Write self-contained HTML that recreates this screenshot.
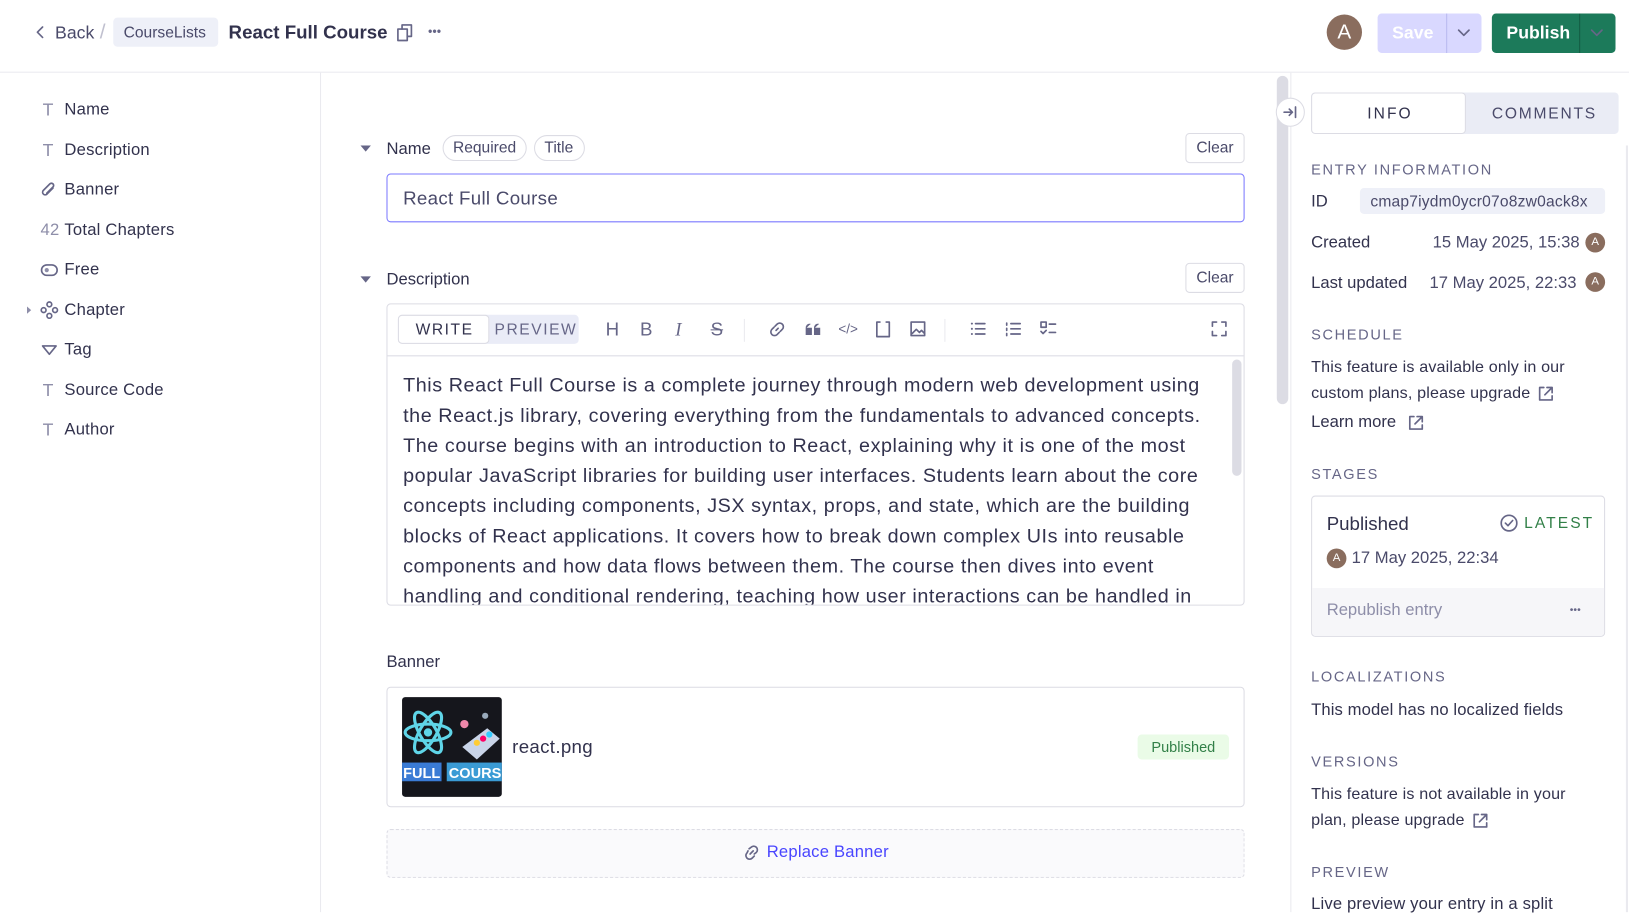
<!DOCTYPE html>
<html><head><meta charset="utf-8"><style>
*{box-sizing:border-box;margin:0;padding:0}
html,body{width:1629px;height:912px;overflow:hidden;background:#fff}
#w{position:absolute;left:0;top:0;width:1568px;height:878px;transform:scale(1.03891);transform-origin:0 0;font-family:"Liberation Sans",sans-serif;color:#32324d;background:#fff}
.a{position:absolute}
.t{position:absolute;white-space:nowrap;line-height:1}
.hd{font-size:14px;letter-spacing:1.6px;color:#666687;font-weight:500}
.btnc{position:absolute;border:1px solid #dcdce4;border-radius:4px;background:#fff;font-size:15px;color:#4a4a6a;text-align:center}
svg{position:absolute;overflow:visible}
.ico{stroke:#666687;fill:none;stroke-width:1.6;stroke-linecap:round;stroke-linejoin:round}
.side .t{font-size:16px;color:#32324d;letter-spacing:0.2px}
.side .i{position:absolute;font-size:17px;color:#8e8ea9;line-height:1}
</style></head><body><div id="w">
<!-- header -->
<div class="a" style="left:0;top:69px;width:1568px;height:1px;background:#eaeaef"></div>
<svg style="left:34px;top:25px" width="10" height="12"><path d="M7 1 L2 6 L7 11" class="ico" stroke="#4a4a6a"/></svg>
<div class="t" style="left:53px;top:23px;font-size:17px;color:#4a4a6a">Back</div>
<div class="t" style="left:96px;top:21px;font-size:20px;color:#c0c0cf">/</div>
<div class="a" style="left:109px;top:17px;width:101px;height:28px;background:#eef0f8;border-radius:4px"></div>
<div class="t" style="left:119px;top:24px;font-size:15px;color:#4a4a6a">CourseLists</div>
<div class="t" style="left:220px;top:22px;font-size:18px;font-weight:bold;color:#32324d">React Full Course</div>
<svg style="left:382px;top:23px" width="16" height="17"><rect x="1" y="5" width="9" height="11" class="ico" stroke="#32324d"/><path d="M5 5 V1 H14 V12 H10" class="ico" stroke="#32324d"/></svg>
<div class="t" style="left:412px;top:24px;font-size:12px;color:#666687;letter-spacing:0px">•••</div>
<div class="a" style="left:1277px;top:14px;width:34px;height:34px;border-radius:50%;background:#8a6d5e;color:#fff;font-size:20px;text-align:center;line-height:34px">A</div>
<div class="a" style="left:1326px;top:13px;width:100px;height:38px;border-radius:4px;background:#d9d8ff"></div>
<div class="a" style="left:1392px;top:13px;width:1px;height:38px;background:#b9b8f0"></div>
<div class="t" style="left:1340px;top:23px;font-size:17px;font-weight:bold;color:#fff">Save</div>
<svg style="left:1403px;top:28px" width="12" height="8"><path d="M1 1 L6 6 L11 1" class="ico" stroke="#fff"/></svg>
<div class="a" style="left:1436px;top:13px;width:119px;height:38px;border-radius:4px;background:#1c7a5a"></div>
<div class="a" style="left:1520px;top:13px;width:1px;height:38px;background:#145c43"></div>
<div class="t" style="left:1450px;top:23px;font-size:17px;font-weight:bold;color:#fff">Publish</div>
<svg style="left:1531px;top:28px" width="12" height="8"><path d="M1 1 L6 6 L11 1" class="ico" stroke="#fff"/></svg>

<!-- sidebar -->
<div class="a" style="left:308px;top:70px;width:1px;height:808px;background:#eaeaef"></div>
<div class="side">
<div class="i" style="left:41px;top:97px">T</div><div class="t" style="left:62px;top:98px">Name</div>
<div class="i" style="left:41px;top:136px">T</div><div class="t" style="left:62px;top:137px">Description</div>
<svg style="left:40px;top:175px" width="15" height="16"><path d="M11 6 L5 12 a2.5 2.5 0 0 1 -3.5 -3.5 L8 2 a2 2 0 0 1 3 3 L5 11" class="ico" stroke="#8e8ea9"/></svg><div class="t" style="left:62px;top:175px">Banner</div>
<div class="t" style="left:39px;top:214px;font-size:16px;color:#8e8ea9">42</div><div class="t" style="left:62px;top:214px">Total Chapters</div>
<svg style="left:39px;top:254px" width="18" height="12"><rect x="1" y="1" width="15" height="10" rx="5" class="ico" stroke="#8e8ea9"/><circle cx="6" cy="6" r="2" fill="#8e8ea9"/></svg><div class="t" style="left:62px;top:252px">Free</div>
<svg style="left:26px;top:295px" width="5" height="7"><path d="M0 0 L4 3.5 L0 7Z" fill="#8e8ea9"/></svg>
<svg style="left:39px;top:290px" width="17" height="17"><circle cx="8.5" cy="3" r="2.3" class="ico" stroke="#8e8ea9"/><circle cx="8.5" cy="14" r="2.3" class="ico" stroke="#8e8ea9"/><circle cx="3" cy="8.5" r="2.3" class="ico" stroke="#8e8ea9"/><circle cx="14" cy="8.5" r="2.3" class="ico" stroke="#8e8ea9"/></svg><div class="t" style="left:62px;top:291px">Chapter</div>
<svg style="left:40px;top:332px" width="15" height="10"><path d="M1 1 H14 L7.5 9Z" class="ico" stroke="#8e8ea9"/></svg><div class="t" style="left:62px;top:329px">Tag</div>
<div class="i" style="left:41px;top:367px">T</div><div class="t" style="left:62px;top:368px">Source Code</div>
<div class="i" style="left:41px;top:405px">T</div><div class="t" style="left:62px;top:406px">Author</div>
</div>

<!-- main -->
<svg style="left:347px;top:140px" width="10" height="6"><path d="M0 0 H10 L5 6Z" fill="#666687"/></svg>
<div class="t" style="left:372px;top:136px;font-size:16px;font-weight:500;color:#32324d">Name</div>
<div class="a" style="left:426px;top:130px;width:81px;height:25px;border:1px solid #dcdce4;border-radius:13px"></div>
<div class="t" style="left:436px;top:135px;font-size:15px;color:#4a4a6a">Required</div>
<div class="a" style="left:514px;top:130px;width:49px;height:25px;border:1px solid #dcdce4;border-radius:13px"></div>
<div class="t" style="left:524px;top:135px;font-size:15px;color:#4a4a6a">Title</div>
<div class="btnc" style="left:1141px;top:128px;width:57px;height:29px;line-height:27px">Clear</div>
<div class="a" style="left:372px;top:167px;width:826px;height:47px;border:1px solid #7b79ff;border-radius:4px"></div>
<div class="t" style="left:388px;top:182px;font-size:18px;color:#4a4a6a;letter-spacing:0.3px">React Full Course</div>

<svg style="left:347px;top:266px" width="10" height="6"><path d="M0 0 H10 L5 6Z" fill="#666687"/></svg>
<div class="t" style="left:372px;top:262px;font-size:16px;font-weight:500">Description</div>
<div class="btnc" style="left:1141px;top:253px;width:57px;height:29px;line-height:27px">Clear</div>
<div class="a" style="left:372px;top:292px;width:826px;height:291px;border:1px solid #dcdce4;border-radius:4px;overflow:hidden">
 <div class="a" style="left:0;top:49px;width:826px;height:1px;background:#dcdce4"></div>
 <div class="a" style="left:10px;top:10px;width:174px;height:28px;background:#eaecf7;border-radius:4px"></div>
 <div class="a" style="left:10px;top:10px;width:88px;height:28px;background:#fff;border:1px solid #dcdce4;border-radius:4px"></div>
 <div class="t" style="left:27px;top:17px;font-size:15px;letter-spacing:1.5px;color:#32324d">WRITE</div>
 <div class="t" style="left:103px;top:17px;font-size:15px;letter-spacing:1.5px;color:#666687">PREVIEW</div>
 <div class="a" style="left:343px;top:14px;width:1px;height:22px;background:#eaeaef"></div>
 <div class="a" style="left:536px;top:14px;width:1px;height:22px;background:#eaeaef"></div>
 <div class="a" style="left:0;top:50px;height:240px;padding:14px 0 0 15px;font-size:19px;line-height:29px;color:#32324d;width:802px;letter-spacing:0.55px">This React Full Course is a complete journey through modern web development using the React.js library, covering everything from the fundamentals to advanced concepts. The course begins with an introduction to React, explaining why it is one of the most popular JavaScript libraries for building user interfaces. Students learn about the core concepts including components, JSX syntax, props, and state, which are the building blocks of React applications. It covers how to break down complex UIs into reusable components and how data flows between them. The course then dives into event handling and conditional rendering, teaching how user interactions can be handled in</div>
 <div class="a" style="left:813px;top:53px;width:9px;height:112px;background:#dcdce4;border-radius:5px"></div>
</div>
<!-- toolbar icons -->
<div class="t" style="left:583px;top:308px;font-size:18px;color:#666687">H</div>
<div class="t" style="left:616px;top:308px;font-size:18px;color:#666687">B</div>
<div class="t" style="left:650px;top:308px;font-size:18px;color:#666687;font-style:italic;font-family:'Liberation Serif',serif">I</div>
<div class="t" style="left:684px;top:308px;font-size:18px;color:#666687;text-decoration:line-through">S</div>
<svg style="left:740px;top:309px" width="16" height="16"><path d="M7 9 L9 7 M6 5 L8 3 a3 3 0 0 1 5 5 L11 10 M10 11 L8 13 a3 3 0 0 1 -5 -5 L5 6" class="ico"/></svg>
<svg style="left:775px;top:311px" width="15" height="11"><path d="M1 5 H6 V11 H1Z M9 5 H14 V11 H9Z M1 5 Q1 1 5 1 M9 5 Q9 1 13 1" fill="#666687" stroke="#666687" stroke-width="1"/></svg>
<div class="t" style="left:807px;top:310px;font-size:13px;color:#666687">&lt;/&gt;</div>
<svg style="left:843px;top:309px" width="14" height="16"><path d="M4 1 H1 V15 H13 V1 H10" class="ico"/></svg>
<svg style="left:876px;top:309px" width="15" height="15"><rect x="1" y="1" width="13" height="13" class="ico"/><path d="M2 12 L6 8 L9 11 L11 9 L14 12" class="ico"/></svg>
<svg style="left:934px;top:310px" width="15" height="13"><path d="M5 1.5 H14 M5 6.5 H14 M5 11.5 H14" class="ico"/><circle cx="1.5" cy="1.5" r="1" fill="#666687"/><circle cx="1.5" cy="6.5" r="1" fill="#666687"/><circle cx="1.5" cy="11.5" r="1" fill="#666687"/></svg>
<svg style="left:968px;top:310px" width="15" height="13"><path d="M5 1.5 H14 M5 6.5 H14 M5 11.5 H14 M1 1 V3 M1 6 V8 M1 11 V13" class="ico"/></svg>
<svg style="left:1001px;top:309px" width="16" height="15"><rect x="1" y="1" width="5" height="5" class="ico"/><path d="M9 3 H15 M9 11 H15 M1 10 L3 12 L6 9" class="ico"/></svg>
<svg style="left:1166px;top:309px" width="15" height="15"><path d="M1 5 V1 H5 M10 1 H14 V5 M14 10 V14 H10 M5 14 H1 V10" class="ico"/></svg>

<div class="t" style="left:372px;top:630px;font-size:16px;font-weight:500">Banner</div>
<div class="a" style="left:372px;top:661px;width:826px;height:116px;border:1px solid #dcdce4;border-radius:4px"></div>
<svg style="left:387px;top:671px" width="96" height="96">
 <rect width="96" height="96" rx="3" fill="#15161c"/>
 <g stroke="#5fd5e8" stroke-width="3" fill="none"><ellipse cx="25" cy="34" rx="22" ry="8"/><ellipse cx="25" cy="34" rx="22" ry="8" transform="rotate(60 25 34)"/><ellipse cx="25" cy="34" rx="22" ry="8" transform="rotate(-60 25 34)"/></g>
 <circle cx="25" cy="34" r="4" fill="#5fd5e8"/>
 <path d="M58 48 L82 30 L94 40 L72 60Z" fill="#c9d4e8"/><circle cx="78" cy="40" r="3" fill="#f06"/><circle cx="72" cy="44" r="3" fill="#fc3"/><circle cx="84" cy="36" r="3" fill="#3cf"/>
 <circle cx="60" cy="26" r="4" fill="#e8a"/><circle cx="80" cy="18" r="3" fill="#9ab"/>
 <rect x="0" y="63" width="38" height="18" fill="#3a7bd5"/><rect x="43" y="63" width="53" height="18" fill="#3a9bd5"/>
 <text x="1" y="78" font-family="Liberation Sans" font-weight="bold" font-size="14" fill="#fff">FULL</text>
 <text x="45" y="78" font-family="Liberation Sans" font-weight="bold" font-size="14" fill="#fff">COURSE</text>
</svg>
<div class="t" style="left:493px;top:710px;font-size:18px;color:#32324d;letter-spacing:0.3px">react.png</div>
<div class="a" style="left:1095px;top:707px;width:88px;height:24px;background:#eafbe7;border-radius:4px;color:#328048;font-size:14px;text-align:center;line-height:24px">Published</div>
<div class="a" style="left:372px;top:798px;width:826px;height:47px;border:1px dashed #dcdce4;border-radius:4px;background:#fafafc"></div>
<svg style="left:715px;top:813px" width="18" height="16"><path d="M7 9 L10 6 M6 4 L8 2.5 a3 3 0 0 1 5 5 L11 9 M11 11 L9 13 a3 3 0 0 1 -5 -5 L5 6" class="ico" stroke="#4945ff"/></svg>
<div class="t" style="left:738px;top:813px;font-size:16px;color:#4945ff;letter-spacing:0.2px">Replace Banner</div>

<!-- divider/scroll -->
<div class="a" style="left:1229px;top:73px;width:11px;height:316px;background:#dcdce4;border-radius:6px"></div>
<div class="a" style="left:1242px;top:70px;width:1px;height:808px;background:#eaeaef"></div>
<div class="a" style="left:1228px;top:94px;width:28px;height:28px;border-radius:50%;border:1px solid #dcdce4;background:#fff"></div>
<svg style="left:1235px;top:102px" width="14" height="12"><path d="M1 6 H9 M6 3 L9 6 L6 9 M12 1 V11" class="ico" stroke="#4a4a6a"/></svg>
<div class="a" style="left:1565px;top:140px;width:2px;height:738px;background:#eaeaef"></div>

<!-- right panel -->
<div class="a" style="left:1262px;top:89px;width:296px;height:40px;background:#eaecf5;border-radius:4px"></div>
<div class="a" style="left:1262px;top:89px;width:149px;height:40px;background:#fff;border:1px solid #dcdce4;border-radius:4px"></div>
<div class="t" style="left:1316px;top:102px;font-size:15px;letter-spacing:2px;color:#32324d;font-weight:500">INFO</div>
<div class="t" style="left:1436px;top:102px;font-size:15px;letter-spacing:1.7px;color:#4a4a6a;font-weight:500">COMMENTS</div>

<div class="t hd" style="left:1262px;top:156px">ENTRY INFORMATION</div>
<div class="t" style="left:1262px;top:187px;font-size:16px">ID</div>
<div class="a" style="left:1309px;top:181px;width:236px;height:25px;background:#eef0f8;border-radius:4px"></div>
<div class="t" style="left:1319px;top:187px;font-size:15px;color:#4a4a6a;letter-spacing:0.2px">cmap7iydm0ycr07o8zw0ack8x</div>
<div class="t" style="left:1262px;top:226px;font-size:16px">Created</div>
<div class="t" style="left:1379px;top:226px;font-size:16px;color:#4a4a6a">15 May 2025, 15:38</div>
<div class="a" style="left:1526px;top:224px;width:19px;height:19px;border-radius:50%;background:#8a6d5e;color:#fff;font-size:11px;text-align:center;line-height:19px">A</div>
<div class="t" style="left:1262px;top:265px;font-size:16px">Last updated</div>
<div class="t" style="left:1376px;top:265px;font-size:16px;color:#4a4a6a">17 May 2025, 22:33</div>
<div class="a" style="left:1526px;top:262px;width:19px;height:19px;border-radius:50%;background:#8a6d5e;color:#fff;font-size:11px;text-align:center;line-height:19px">A</div>

<div class="t hd" style="left:1262px;top:315px">SCHEDULE</div>
<div class="a" style="left:1262px;top:341px;width:290px;font-size:15.5px;line-height:25px;color:#32324d;letter-spacing:0.15px">This feature is available only in our custom plans, please upgrade <svg style="position:relative;top:3px;left:3px" width="15" height="15"><path d="M6 2 H2 V14 H14 V10 M9 2 H14 V7 M14 2 L7 9" class="ico" stroke="#32324d"/></svg></div>
<div class="t" style="left:1262px;top:399px;font-size:16px">Learn more</div>
<svg style="left:1355px;top:399px" width="15" height="15"><path d="M6 2 H2 V14 H14 V10 M9 2 H14 V7 M14 2 L7 9" class="ico" stroke="#32324d"/></svg>

<div class="t hd" style="left:1262px;top:449px">STAGES</div>
<div class="a" style="left:1262px;top:477px;width:283px;height:136px;border:1px solid #dcdce4;border-radius:4px;overflow:hidden">
 <div class="a" style="left:0;top:88px;width:283px;height:48px;background:#f6f6f9"></div>
</div>
<div class="t" style="left:1277px;top:495px;font-size:18px;font-weight:500">Published</div>
<svg style="left:1444px;top:495px" width="17" height="17"><circle cx="8.5" cy="8.5" r="7.5" class="ico" stroke="#328048"/><path d="M5 8.5 L7.5 11 L12 6" class="ico" stroke="#328048"/></svg>
<div class="t" style="left:1467px;top:496px;font-size:15px;letter-spacing:2px;color:#328048;font-weight:500">LATEST</div>
<div class="a" style="left:1277px;top:528px;width:19px;height:19px;border-radius:50%;background:#8a6d5e;color:#fff;font-size:11px;text-align:center;line-height:19px">A</div>
<div class="t" style="left:1301px;top:530px;font-size:16px;color:#4a4a6a">17 May 2025, 22:34</div>
<div class="t" style="left:1277px;top:580px;font-size:16px;color:#8e8ea9">Republish entry</div>
<div class="t" style="left:1511px;top:583px;font-size:10px;color:#666687;letter-spacing:0px">•••</div>

<div class="t hd" style="left:1262px;top:644px">LOCALIZATIONS</div>
<div class="t" style="left:1262px;top:676px;font-size:16px;letter-spacing:0.1px">This model has no localized fields</div>
<div class="t hd" style="left:1262px;top:726px">VERSIONS</div>
<div class="a" style="left:1262px;top:752px;width:275px;font-size:15.5px;line-height:25px;color:#32324d;letter-spacing:0.15px">This feature is not available in your plan, please upgrade <svg style="position:relative;top:3px;left:3px" width="15" height="15"><path d="M6 2 H2 V14 H14 V10 M9 2 H14 V7 M14 2 L7 9" class="ico" stroke="#32324d"/></svg></div>
<div class="t hd" style="left:1262px;top:832px">PREVIEW</div>
<div class="t" style="left:1262px;top:863px;font-size:16px;letter-spacing:0.15px">Live preview your entry in a split</div>
</div></body></html>
